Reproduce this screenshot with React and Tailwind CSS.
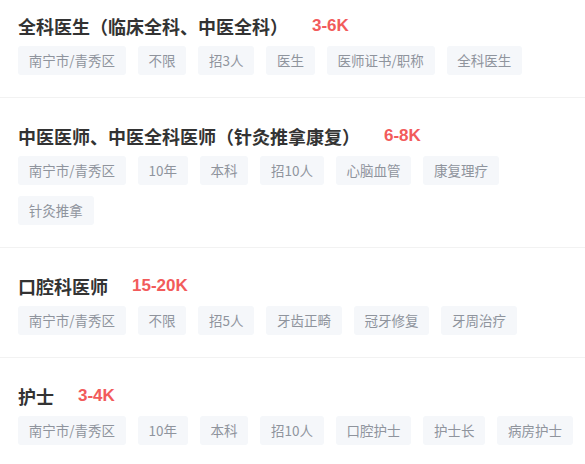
import React from 'react';

const jobs = [
  {
    title: '全科医生（临床全科、中医全科）',
    salary: '3-6K',
    tags: ['南宁市/青秀区', '不限', '招3人', '医生', '医师证书/职称', '全科医生'],
  },
  {
    title: '中医医师、中医全科医师（针灸推拿康复）',
    salary: '6-8K',
    tags: ['南宁市/青秀区', '10年', '本科', '招10人', '心脑血管', '康复理疗', '针灸推拿'],
  },
  {
    title: '口腔科医师',
    salary: '15-20K',
    tags: ['南宁市/青秀区', '不限', '招5人', '牙齿正畸', '冠牙修复', '牙周治疗'],
  },
  {
    title: '护士',
    salary: '3-4K',
    tags: ['南宁市/青秀区', '10年', '本科', '招10人', '口腔护士', '护士长', '病房护士'],
  },
];

function JobItem({ job, first }) {
  return (
    <div className={`pl-[18px] pr-[6px] pb-[22px] border-b border-[#f2f2f2] ${first ? 'pt-[14px]' : 'pt-[26px]'}`}>
      <div className="flex items-center h-[24px]">
        <h3 className="text-[18px] leading-[24px] font-bold text-[#333333]">{job.title}</h3>
        <span
          className="ml-6 text-[17px] leading-[24px] font-bold text-[#f25b5b]"
          style={{ fontFamily: '"Liberation Sans", Arial, sans-serif' }}
        >
          {job.salary}
        </span>
      </div>
      <div className="mt-[8px] flex flex-wrap gap-x-3 gap-y-[11px]">
        {job.tags.map((t, i) => (
          <span
            key={i}
            className="h-[29px] leading-[29px] px-[10.75px] rounded-[3px] bg-[#f5f7fa] text-[13.5px] text-[#8f949d] whitespace-nowrap"
          >
            {t}
          </span>
        ))}
      </div>
    </div>
  );
}

export default function App() {
  return (
    <div
      className="w-[585px] h-[464px] overflow-hidden bg-white"
      style={{ fontFamily: '"Noto Sans CJK SC", "Noto Sans", sans-serif' }}
    >
      {jobs.map((job, i) => (
        <JobItem key={i} job={job} first={i === 0} />
      ))}
    </div>
  );
}
